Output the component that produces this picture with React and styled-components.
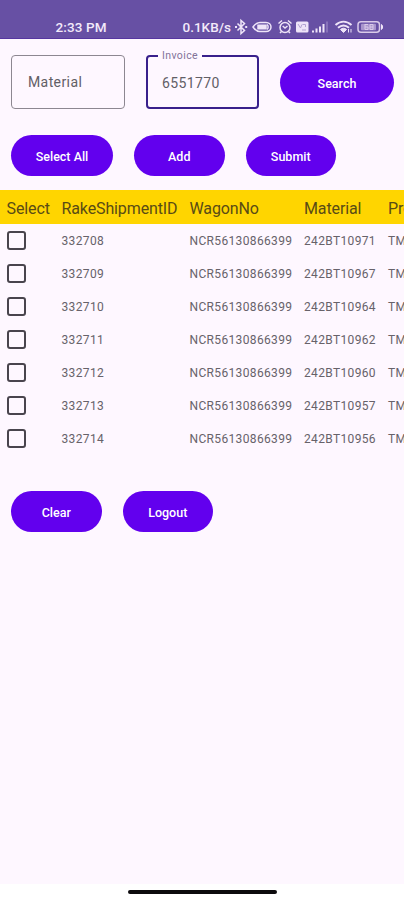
import React from 'react';
import styled, { createGlobalStyle } from 'styled-components';

const GlobalStyle = createGlobalStyle`
  * {
    box-sizing: border-box;
  }
  body {
    margin: 0;
    background: #fef7ff;
    font-family: Roboto, sans-serif;
  }
`;

const Screen = styled.div`
  display: flex;
  flex-direction: column;
  width: 404px;
  height: 900px;
  overflow: hidden;
  background: #fef7ff;
`;

const StatusBar = styled.header`
  display: flex;
  justify-content: space-between;
  height: 39px;
  padding: 15px 20px 0 55.5px;
  background: #6750a4;
  border-bottom: 1px solid #5636a0;
  color: #f3eafa;
  font-size: 13.5px;
  font-weight: 500;
  line-height: 24px;
`;

const Clock = styled.span`
  letter-spacing: 0.1px;
`;

const StatusInfo = styled.div`
  display: flex;
  width: 202px;

  svg {
    flex: none;
    height: 24px;
  }
`;

const Speed = styled.span`
  width: 52px;
  padding-left: 0.5px;
  white-space: nowrap;
`;

const Content = styled.main`
  display: flex;
  flex-direction: column;
  flex: 1;
`;

const SearchRow = styled.div`
  display: flex;
  align-items: center;
  gap: 21px;
  height: 54px;
  margin: 16px 9px 0 11px;
`;

const Field = styled.fieldset`
  width: ${(props) => (props.$active ? '113px' : '114px')};
  height: ${(props) => (props.$active ? '60px' : '54px')};
  min-width: 0;
  margin: ${(props) => (props.$active ? '-6px 0 0' : '0')};
  padding: 0;
  border: ${(props) => (props.$active ? '2px solid #39208c' : '1px solid #8d8791')};
  border-radius: 4px;
`;

const Legend = styled.legend`
  height: 13px;
  margin-left: 10px;
  padding: 1px 4px 0;
  color: #827399;
  font-size: 10.5px;
  line-height: 12px;
  letter-spacing: 0.4px;
`;

const Value = styled.div`
  padding-left: ${(props) => (props.$active ? '14px' : '16px')};
  color: #625e66;
  font-size: 14px;
  line-height: ${(props) => (props.$active ? '43px' : '53px')};
  letter-spacing: 0.4px;
`;

const ButtonRow = styled.div`
  display: flex;
  gap: 21px;
  margin: ${(props) => props.$top}px 0 0 11px;
`;

const Button = styled.button`
  flex: none;
  width: ${(props) => props.$width || 90.5}px;
  height: 41px;
  padding: 2px 0 0;
  border: 0;
  border-radius: 21px;
  background: #6200ee;
  color: #fff;
  font-family: inherit;
  font-size: 12.5px;
  font-weight: 500;
`;

const Table = styled.div`
  width: 404px;
  margin-top: 14px;
  overflow: hidden;
`;

const Row = styled.div`
  display: grid;
  grid-template-columns: 55px 128px 114.5px 84px 80px;
  align-items: center;
  width: 480px;
  height: 33px;
  padding-left: 6.5px;
  color: #67626a;
  font-size: 12px;
  letter-spacing: 0.35px;

  span {
    padding-top: 1px;
  }
`;

const HeadRow = styled(Row)`
  height: 34px;
  padding-top: 2px;
  background: #ffd500;
  color: #594b16;
  font-size: 16px;
  letter-spacing: -0.12px;

  span {
    padding-top: 0;
  }
`;

const Checkbox = styled.div`
  width: 19px;
  height: 19px;
  margin-left: 0.5px;
  border: 2px solid #49444d;
  border-radius: 3px;
`;

const NavBar = styled.footer`
  display: flex;
  justify-content: center;
  height: 16px;
  padding-top: 6px;
  background: #fff;
`;

const NavHandle = styled.div`
  width: 149px;
  height: 4px;
  border-radius: 2px;
  background: #0c0a0d;
`;

const rows = [
  ['332708', '242BT10971'],
  ['332709', '242BT10967'],
  ['332710', '242BT10964'],
  ['332711', '242BT10962'],
  ['332712', '242BT10960'],
  ['332713', '242BT10957'],
  ['332714', '242BT10956'],
];

const StatusIcons = () => (
  <svg width='150' height='24' viewBox='0 0 150 24' fill='none' stroke='#eee4f8' strokeWidth='1.5'>
    {/* bluetooth */}
    <path d='M3.5 8.5l7 7-3.500 3V5.500l3.500 3-7 7' />
    <path d='M1 12h2M11.200 12h2' strokeWidth='2' />
    {/* game controller pill */}
    <path d='M19 12c2-3 4-4.500 7-4.500h6c3 0 5 2 5 4.500s-2 4.500-5 4.500h-6c-3 0-5-1.500-7-4.500z' />
    <path d='M24 10.300h8v3.400h-8z' fill='#eee4f8' />
    <path d='M33 9.500c1.500 1 1.500 4 0 5' />
    {/* alarm */}
    <circle cx='51' cy='12.500' r='5' />
    <path d='M44.500 8.500l3.500-3M57.500 8.500l-3.500-3M48.700 11l2.300 2 2.500-2M47.500 16.500l-1.500 1.500M54.500 16.500l1.500 1.500' />
    {/* volte badge */}
    <rect x='62' y='6.500' width='12.500' height='11' rx='1.500' fill='#eee4f8' stroke='none' />
    <path d='M64 9l2.500 4 1.500-3.500M68.500 9.500h3v2.500M68 15h4' stroke='#b3a2d2' strokeWidth='1' />
    {/* signal */}
    <path d='M79 15.500v2M82.500 13.500v4M86 11.500v6M89.500 9v8.500' strokeWidth='2' />
    <path d='M93 6.500v11' stroke='#927ec0' strokeWidth='1.500' />
    {/* wifi */}
    <path d='M101.500 10c5-4.500 11-4.500 16 0M104 12.800c3.500-3 7.500-3 11 0' strokeWidth='2' />
    <path d='M106.500 14.500c2-1.700 4-1.700 6 0l-3 3z' fill='#eee4f8' strokeWidth='1' />
    <path d='M114.500 14v3.500M117 14v3.500' strokeWidth='1' />
    {/* battery */}
    <rect x='124' y='6.700' width='21.500' height='10.600' rx='3' stroke='#d9cae9' />
    <rect x='127' y='8.800' width='15' height='6.400' rx='1' fill='#a995cd' stroke='none' />
    <path d='M147.500 9.500c1.500 1 1.500 4 0 5z' fill='#eee4f8' strokeWidth='1' />
    <path d='M131 9.500h3M131 9v5.500h3v-2.500h-3M136 9.500h3v5h-3zM136 12h3' stroke='#d9cae9' strokeWidth='1' />
  </svg>
);

const App = () => {
  return (
    <Screen>
      <GlobalStyle />
      <StatusBar>
        <Clock>2:33 PM</Clock>
        <StatusInfo>
          <Speed>0.1KB/s</Speed>
          <StatusIcons />
        </StatusInfo>
      </StatusBar>

      <Content>
        <SearchRow>
          <Field>
            <Value>Material</Value>
          </Field>
          <Field $active>
            <Legend>Invoice</Legend>
            <Value $active>6551770</Value>
          </Field>
          <Button $width={114}>Search</Button>
        </SearchRow>

        <ButtonRow $top={26}>
          <Button $width={102}>Select All</Button>
          <Button>Add</Button>
          <Button>Submit</Button>
        </ButtonRow>

        <Table>
          <HeadRow>
            <span>Select</span>
            <span>RakeShipmentID</span>
            <span>WagonNo</span>
            <span>Material</span>
            <span>Product</span>
          </HeadRow>
          {rows.map(([id, material]) => (
            <Row key={id}>
              <Checkbox />
              <span>{id}</span>
              <span>NCR56130866399</span>
              <span>{material}</span>
              <span>TMT</span>
            </Row>
          ))}
        </Table>

        <ButtonRow $top={36}>
          <Button>Clear</Button>
          <Button>Logout</Button>
        </ButtonRow>
      </Content>

      <NavBar>
        <NavHandle />
      </NavBar>
    </Screen>
  );
};

export default App;
